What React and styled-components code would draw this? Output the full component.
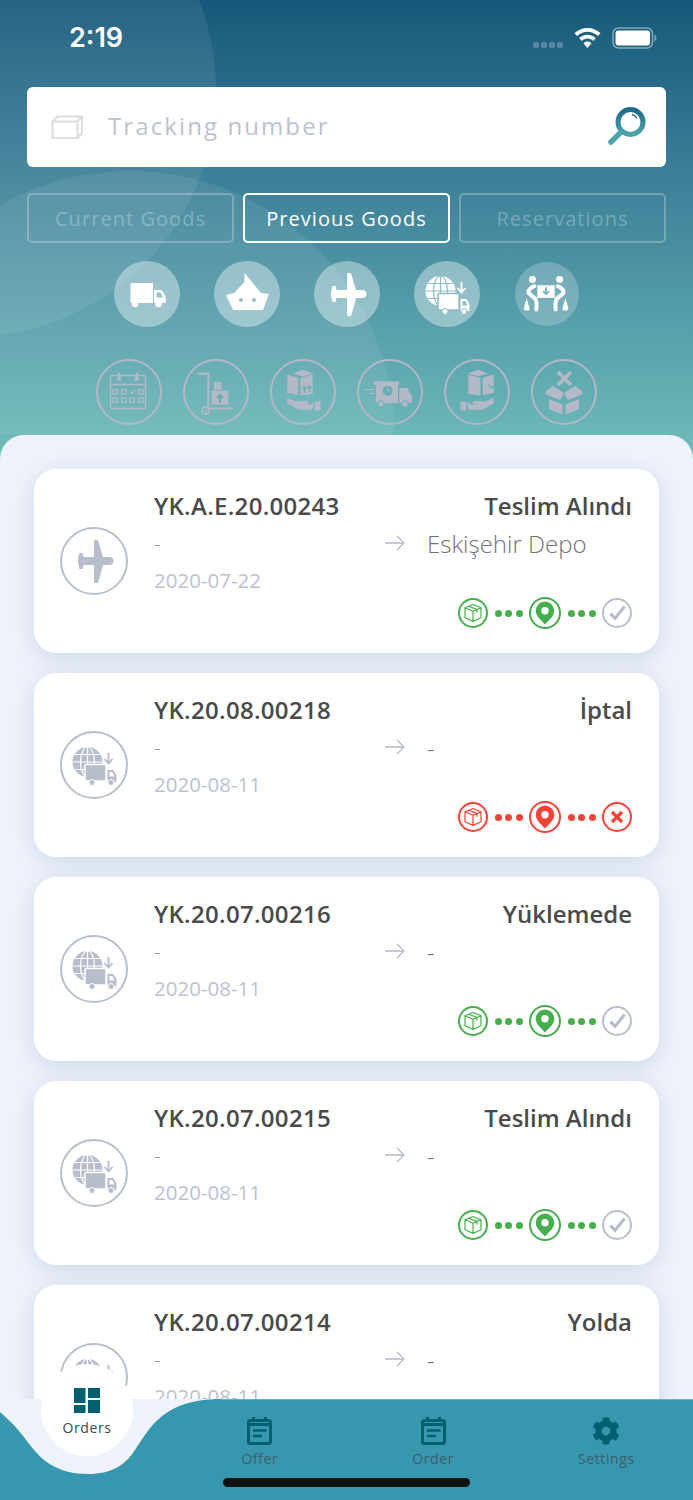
import React from 'react';
import styled, { createGlobalStyle } from 'styled-components';
import { FaCog } from 'react-icons/fa';

const Global = createGlobalStyle`
  html, body { margin: 0; padding: 0; background: #eef2fb; }
  * { box-sizing: border-box; }
  body { font-family: "Open Sans", "Noto Sans", sans-serif; }
`;

const Page = styled.div`
  width: 693px; height: 1500px; overflow: hidden; display: flex; flex-direction: column;
  background: linear-gradient(180deg, #165879 0%, #3b7f98 37%, #72bebc 100%) no-repeat;
  background-size: 100% 470px;
`;
const Header = styled.header`
  position: relative; height: 435px; flex: none; overflow: hidden; padding: 0 27px;
  display: flex; flex-direction: column;
`;
const Blob = styled.div`
  position: absolute; border-radius: 50%; background: rgba(255,255,255,.075); pointer-events: none;
  left: ${p => p.$x - p.$r}px; top: ${p => p.$y - p.$r}px; width: ${p => p.$r * 2}px; height: ${p => p.$r * 2}px;
`;
const StatusBar = styled.div`
  position: relative; height: 87px; flex: none; display: flex; justify-content: space-between; align-items: flex-start;
  padding: 20px 9px 0 42px; color: #fff;
`;
const Time = styled.div`
  font-family: Inter, "Liberation Sans", Arial, sans-serif; font-weight: 600; font-size: 27px; line-height: 36px;
`;
const StatusIcons = styled.div`display: flex; align-items: center; gap: 11px; margin-top: 7px;`;
const SearchBox = styled.div`
  position: relative; height: 80px; flex: none; background: #fff; border-radius: 6px; display: flex; align-items: center;
  padding: 0 20px 0 24px;
`;
const Placeholder = styled.div`
  flex: 1; margin: -4px 0 0 25px; color: #bcc2d2; font-size: 24px; letter-spacing: 2.1px;
`;
const SearchSlot = styled.div`display: flex; margin-top: -2px;`;
const Tabs = styled.div`position: relative; display: flex; gap: 9px; margin-top: 26px; flex: none;`;
const TabBtn = styled.div`
  flex: 1; height: 50px; border-radius: 5px; display: flex; align-items: center; justify-content: center;
  font-size: 20px; letter-spacing: 1.05px;
  border: 2px solid ${p => p.$active ? '#fff' : 'rgba(255,255,255,.25)'};
  color: ${p => p.$active ? '#fff' : 'rgba(255,255,255,.28)'};
`;
const ModeRow = styled.div`
  position: relative; display: flex; justify-content: center; align-items: center; gap: ${p => p.$gap}px; margin-top: ${p => p.$top}px; flex: none;
`;
const ModeBtn = styled.div`
  width: ${p => p.$dim ? 64 : 66}px; height: ${p => p.$dim ? 64 : 66}px; border-radius: 50%;
  background: rgba(255,255,255,${p => p.$dim ? .22 : .38}); color: #fff;
  display: flex; align-items: center; justify-content: center; flex: none; margin-left: ${p => p.$dim ? 1 : 0}px;
`;
const StateBtn = styled.div`
  width: 66px; height: 66px; border-radius: 50%; border: 2px solid #b2b8c6; color: #b3b9c7;
  display: flex; align-items: center; justify-content: center; flex: none;
`;
const Panel = styled.main`
  height: 964px; flex: none; background: #eef2fb; border-radius: 24px 24px 0 0; overflow: hidden;
  padding: 34px 34px 0; display: flex; flex-direction: column; gap: 20px;
`;
const Card = styled.article`
  height: 184px; flex: none; background: #fff; border-radius: 22px; display: flex; align-items: center;
  box-shadow: 0 5px 22px rgba(120,140,180,.25); padding: 0 27px 0 26px;
`;
const CardIcon = styled.div`
  width: 68px; height: 68px; border-radius: 50%; border: 2px solid #b9c0ce; color: #b7bdcb; flex: none; margin: 0 26px 1px 0;
  display: flex; align-items: center; justify-content: center;
`;
const CardBody = styled.div`flex: 1; min-width: 0; height: 100%; padding-top: 19px; display: flex; flex-direction: column;`;
const TitleRow = styled.div`
  display: flex; justify-content: space-between; font-size: 24px; font-weight: 600; color: #4a4a4a; line-height: 36px;
`;
const OrderId = styled.span`letter-spacing: .3px;`;
const RouteRow = styled.div`
  display: grid; grid-template-columns: 230px 43px 1fr; align-items: center; height: 38px;
  font-size: 24px; font-weight: 300; color: #6f7278;
`;
const Dash = styled.span`color: ${p => p.$left ? '#8d919c' : '#6f7278'}; font-size: ${p => p.$small ? 20 : 24}px;`;
const ArrowCell = styled.div`color: #b4bbca; display: flex; align-items: center; padding-left: 1px;`;
const DateText = styled.div`font-size: 20.5px; color: #bcc2d1; line-height: 28px; margin-top: 4px;`;
const Track = styled.div`display: flex; align-items: center; justify-content: flex-end; gap: 6.5px; margin-top: 3px; height: 32px;`;
const Stage = styled.div`
  width: ${p => p.$size || 30}px; height: ${p => p.$size || 30}px; border-radius: 50%; flex: none;
  border: 2px solid ${p => p.$color}; color: ${p => p.$color};
  display: flex; align-items: center; justify-content: center;
`;
const Dots = styled.div`display: flex; gap: 3.5px;`;
const Dot = styled.i`width: 7px; height: 7px; border-radius: 50%; background: ${p => p.$color}; display: block;`;

const TabBar = styled.nav`
  position: relative; height: 101px; flex: none; background: #eef2fb;
  display: grid; grid-template-columns: repeat(4, 1fr);
`;
const Wave = styled.svg`position: absolute; inset: 0; display: block;`;
const NavItem = styled.div`
  position: relative; display: flex; flex-direction: column; align-items: center; padding-top: 18px;
  color: #00606f; font-size: 14px;
`;
const NavLabel = styled.span`color: #3f5e6b; font-size: 14px; letter-spacing: .6px; line-height: 19px; margin-top: 4px;`;
const OrdersBubble = styled.div`
  position: absolute; left: 41px; top: -35px; width: 92px; height: 92px; border-radius: 50%; background: #fff;
  display: flex; flex-direction: column; align-items: center; padding-top: 24px; color: #00606f;
`;
const OrdersLabel = styled.span`color: #444; font-size: 14px; letter-spacing: .6px; line-height: 19px; margin-top: 5px;`;
const HomeBar = styled.div`
  position: absolute; left: 223px; top: 79px; width: 247px; height: 9px; border-radius: 5px; background: #111;
`;

/* ---------- drawings ---------- */
const Ico = ({ children, s = 66, vb = 66 }) => (
  <svg width={s} height={s} viewBox={`0 0 ${vb} ${vb}`} style={{ flex: 'none', margin: -2 }} fill="currentColor">{children}</svg>
);
const Truck = () => (
  <Ico>
    <path d="M16.500 23.500q0-1.500 1.500-1.500H38q1 0 1 1v19H18q-1.500 0-1.500-1.500z" />
    <path d="M40 29h6.500q1.500 0 2.300 1.500l3 6V42H40zM42.500 31.500v5h6.500l-2.500-5z" fillRule="evenodd" />
    <circle cx="21" cy="43" r="3.200" /><circle cx="44.500" cy="43" r="3.200" />
  </Ico>
);
const Ship = ({ cut }) => (
  <Ico>
    <path d="M12 34l8-2 10.500-11V12L47 32l8 1-6 16H19z" />
    <circle cx="27" cy="39" r="2" fill={cut} /><circle cx="40" cy="39" r="2" fill={cut} />
  </Ico>
);
const Plane = () => (
  <Ico>
    <path d="M33 13q0-1 1.200-1H36q1 0 1.400 1.500L42 29h6q4.500 0 4.500 4T48 37h-6l-4.500 16.500q-.4 1.500-1.500 1.500h-2q-1 0-1-2V37H22.500L21.500 41h-3L17 35v-4l1.500-6h3l1 4H33z" />
  </Ico>
);
const GlobeTruck = ({ cut }) => (
  <Ico>
    <circle cx="26.500" cy="30" r="15" />
    <g fill="none" stroke={cut} strokeWidth="1.200">
      <ellipse cx="26.500" cy="30" rx="7" ry="15" />
      <path d="M26.500 15v30M11.500 30h30M14 22.500h25M14 37.500h25" />
    </g>
    <path d="M24 34q0-1.500 1.500-1.500h18q1.500 0 1.500 1.500v15H25.500q-1.500 0-1.500-1.500z" stroke={cut} strokeWidth="1.500" />
    <path d="M46.500 38h5q1 0 1.500 1l2.500 4.500V50h-9zM48.500 40v4.500h5l-2.200-4.500z" fillRule="evenodd" />
    <circle cx="31" cy="50.500" r="3" stroke={cut} strokeWidth="1" /><circle cx="50" cy="50.500" r="3" stroke={cut} strokeWidth="1" />
    <path d="M47.500 21v10M43.500 27l4 4.500 4-4.500" fill="none" stroke="currentColor" strokeWidth="1.800" />
  </Ico>
);
const People = ({ cut }) => (
  <Ico s={64} vb={66}>
    <circle cx="18" cy="18" r="3.600" /><circle cx="46" cy="18" r="3.600" />
    <path d="M23 24h18v13H23z" />
    <path d="M32 26v6M29 30l3 3 3-3" fill="none" stroke={cut} strokeWidth="1.800" />
    <g fill="none" stroke="currentColor" strokeWidth="4.200" strokeLinecap="round" strokeLinejoin="round">
      <path d="M20 25q-7 3-6 7l7 6q2 4 1 11" /><path d="M44 25q7 3 6 7l-7 6q-2 4-1 11" />
    </g>
    <path d="M12 37l-3 11q0 2 2.500 2H14q1.500 0 1-2zM52 37l3 11q0 2-2.500 2H50q-1.500 0-1-2z" />
  </Ico>
);
const Calendar = () => (
  <Ico>
    <g fill="none" stroke="currentColor" strokeWidth="1.300" transform="translate(1.500 0)">
      <rect x="13" y="16.500" width="35" height="33" rx="2" />
      <path d="M13 25.500h35" />
      {[15.500, 24, 32.500, 41].map(x => <rect key={x} x={x} y="39" width="4.500" height="4.500" />)}
      {[15.500, 24, 41].map(x => <rect key={x} x={x} y="30.500" width="4.500" height="4.500" />)}
      <path d="M32.500 32.500l2 2 3.500-4" />
    </g>
    <rect x="22" y="13.500" width="2.500" height="6" rx="1.200" /><rect x="39.500" y="13.500" width="2.500" height="6" rx="1.200" />
    <circle cx="23.200" cy="20" r="2.200" /><circle cx="40.700" cy="20" r="2.200" />
  </Ico>
);
const Trolley = ({ cut }) => (
  <Ico>
    <path d="M14.300 14.700h11V49.500H49.700" fill="none" stroke="currentColor" strokeWidth="2" />
    <circle cx="22.700" cy="51.700" r="3.500" fill="none" stroke="currentColor" strokeWidth="1.800" />
    <circle cx="22.700" cy="51.700" r="1" />
    <rect x="31" y="23" width="7.700" height="7.700" />
    <rect x="28.700" y="31.700" width="16.600" height="14" />
    <path d="M37 43.500v-7M34 39l3-3 3 3" fill="none" stroke={cut} strokeWidth="2.200" />
  </Ico>
);
const HandBox = ({ cut, flip }) => (
  <Ico>
    <g transform={flip ? 'translate(67 0) scale(-1 1)' : undefined}>
      <path d="M23 14.500l10-3.800 10 3.800-10 3z" />
      <path d="M17.300 15.500l11 3.300V36l-11-2zM30.500 19l12.200-3.500V35l-12.200 1.500z" />
      {flip ? (
        <path d="M38.500 25l-3 4-2-2" fill="none" stroke={cut} strokeWidth="1.200" transform="translate(-16 0)" />
      ) : (
        <path d="M34.500 34v-6M32.500 30l2-2 2 2M39.500 33v-6M37.500 29l2-2 2 2" fill="none" stroke={cut} strokeWidth="1.200" />
      )}
      <path d="M17.300 39l8 3.300 11.400-.3q2.500 1 1 3.200l-5.700.8 8.500-.5 3-2 1 1-2.500 6.200H28.300l-8.300-5-2.700-1z" />
      <rect x="45" y="42.500" width="5.500" height="9" />
    </g>
  </Ico>
);
const FastTruck = ({ cut }) => (
  <Ico>
    <path d="M17 22.300h25v3.500h-1V44H19V26h-2z" />
    <path d="M42.300 29H50l4.700 7.500V44H42.300z" />
    <circle cx="24" cy="45" r="3.300" stroke={cut} strokeWidth="1" /><circle cx="48" cy="45" r="3.300" stroke={cut} strokeWidth="1" />
    <circle cx="30.700" cy="31.700" r="5.500" fill={cut} stroke="currentColor" strokeWidth="1.200" />
    <path d="M30.700 28.500v3.300h3" fill="none" stroke="currentColor" strokeWidth="1" />
    <path d="M7 30.500h11M12 34.500h6" stroke="currentColor" strokeWidth="1.200" />
  </Ico>
);
const OpenBox = () => (
  <Ico>
    <path d="M27 13l13 13M40 13L27 26" stroke="currentColor" strokeWidth="3.600" fill="none" />
    <path d="M22 27l11 7-4 7-15-6 1-3zM44 27l-11 7 4 7 15-6-1-3z" />
    <path d="M18 40l13.500 5.500v10L18 50zM48 40l-13.500 5.500v10L48 50z" />
  </Ico>
);
const BoxOutline = () => (
  <svg width="32" height="24" viewBox="0 0 32 24" fill="none" stroke="#dedede" strokeWidth="2.200">
    <path d="M1.500 6.500h25v16.500h-25zM26.500 6.500L31 1.500H6.500L1.500 6.500M26.500 23L31 18V1.500" />
  </svg>
);
const SearchIcon = () => (
  <svg width="40" height="40" viewBox="0 0 40 40" fill="none">
    <defs><linearGradient id="lens" x1="0" y1="0" x2="0" y2="1"><stop offset="0" stopColor="#1c6a8a" /><stop offset="1" stopColor="#4ea4ac" /></linearGradient></defs>
    <circle cx="24.500" cy="16" r="12.500" stroke="url(#lens)" strokeWidth="5" />
    <path d="M5 36L14 27" stroke="#4ea4ac" strokeWidth="5.500" strokeLinecap="round" />
    <path d="M26 8.500q3.500 1 5 4" stroke="#1c6a8a" strokeWidth="1.500" />
  </svg>
);
const Wifi = () => (
  <svg width="27" height="20" viewBox="0 0 27 20" fill="#fff">
    <path d="M13.500 0C8.500 0 4 2 .5 5.300l2.600 2.800C5.900 5.500 9.500 3.800 13.500 3.800s7.600 1.700 10.400 4.300l2.600-2.800C23 2 18.500 0 13.500 0z" />
    <path d="M13.500 6.800c-3.200 0-6.200 1.300-8.300 3.300l2.600 2.800c1.500-1.400 3.500-2.300 5.700-2.300s4.200.9 5.700 2.300l2.600-2.800c-2.100-2-5.100-3.300-8.300-3.300z" />
    <path d="M13.500 13.600c-1.600 0-3 .6-4 1.600l4 4.800 4-4.800c-1-1-2.400-1.600-4-1.600z" />
  </svg>
);
const Battery = () => (
  <svg width="45" height="22" viewBox="0 0 45 22">
    <rect x="1" y="1" width="39.500" height="20" rx="5.500" fill="none" stroke="rgba(255,255,255,.45)" strokeWidth="1.500" />
    <rect x="3.500" y="3.500" width="34.500" height="15" rx="3" fill="#fff" />
    <path d="M42.500 7.500q2 1 2 3.500t-2 3.500z" fill="rgba(255,255,255,.45)" />
  </svg>
);
const Signal = () => (
  <svg width="31" height="20" viewBox="0 0 31 20" fill="rgba(255,255,255,.25)" style={{ marginRight: -1 }}>
    {[3, 11, 19, 27].map(x => <rect key={x} x={x - 3} y="14" width="6" height="6" rx="2" />)}
  </svg>
);
const Arrow = () => (
  <svg width="20" height="16" viewBox="0 0 20 16" fill="none" stroke="currentColor" strokeWidth="1.300">
    <path d="M0 8h19M12 1l7 7-7 7" />
  </svg>
);
const StageBox = () => (
  <svg width="20" height="20" viewBox="0 0 20 20" fill="none" stroke="currentColor" strokeWidth="1.200" strokeLinejoin="round">
    <path d="M10 1.500l8 3.300v10L10 18.500 2 14.800v-10zM2 4.800l8 3.500 8-3.500M10 8.300v10.200M6 3.200l8 3.400v3" />
  </svg>
);
const StagePin = () => (
  <svg width="20" height="24" viewBox="0 0 20 24" fill="currentColor">
    <path fillRule="evenodd" d="M10 .5a9.300 9.300 0 0 1 9.300 9.300c0 5-5.300 9.500-9.300 13.700C6 19.300.7 14.800.7 9.800A9.300 9.300 0 0 1 10 .5zm0 5.600a3.700 3.700 0 1 0 0 7.400 3.700 3.700 0 0 0 0-7.400z" />
  </svg>
);
const StageCheck = () => (
  <svg width="20" height="18" viewBox="0 0 20 18" fill="none" stroke="#b5bbc9" strokeWidth="3">
    <path d="M3.500 9.500l4.500 5L17.500 2.500" />
  </svg>
);
const StageX = () => (
  <svg width="14" height="14" viewBox="0 0 14 14" fill="none" stroke="currentColor" strokeWidth="3.300">
    <path d="M2 2l10 10M12 2L2 12" />
  </svg>
);
const GridIcon = () => (
  <svg width="26" height="25" viewBox="0 0 26 25" fill="currentColor">
    <rect x="0" y="0" width="11.500" height="15" /><rect x="14" y="0" width="12" height="10" />
    <rect x="0" y="17" width="11.500" height="8" /><rect x="14" y="12" width="12" height="13" />
  </svg>
);
const NoteIcon = () => (
  <svg width="25" height="28" viewBox="0 0 25 28" fill="none">
    <rect x="1.500" y="3.500" width="22" height="23" rx="2" stroke="currentColor" strokeWidth="3" />
    <path d="M1.500 6h22v3h-22zM5 0h3v4H5zM17 0h3v4h-3z" fill="currentColor" />
    <path d="M6 13.500h13.500M6 19h9" stroke="currentColor" strokeWidth="2.600" />
  </svg>
);

const GREEN = '#46ae4c', RED = '#f44336', GREY = '#b9c0ce';

const StageTrack = ({ color, cancelled }) => (
  <Track>
    <Stage $color={color}><StageBox /></Stage>
    <Dots><Dot $color={color} /><Dot $color={color} /><Dot $color={color} /></Dots>
    <Stage $color={color} $size={32}><StagePin /></Stage>
    <Dots><Dot $color={color} /><Dot $color={color} /><Dot $color={color} /></Dots>
    <Stage $color={cancelled ? color : GREY}>{cancelled ? <StageX /> : <StageCheck />}</Stage>
  </Track>
);

const orders = [
  { id: 'YK.A.E.20.00243', status: 'Teslim Alındı', to: 'Eskişehir Depo', date: '2020-07-22', plane: true },
  { id: 'YK.20.08.00218', status: 'İptal', to: '-', date: '2020-08-11', cancelled: true },
  { id: 'YK.20.07.00216', status: 'Yüklemede', to: '-', date: '2020-08-11' },
  { id: 'YK.20.07.00215', status: 'Teslim Alındı', to: '-', date: '2020-08-11' },
  { id: 'YK.20.07.00214', status: 'Yolda', to: '-', date: '2020-08-11' },
];

export default function App() {
  return (
    <Page>
      <Global />
      <Header>
        <Blob $x={-31} $y={90} $r={247} />
        <Blob $x={130} $y={435} $r={264} />
        <StatusBar>
          <Time>2:19</Time>
          <StatusIcons><Signal /><Wifi /><Battery /></StatusIcons>
        </StatusBar>
        <SearchBox>
          <BoxOutline />
          <Placeholder>Tracking number</Placeholder>
          <SearchSlot><SearchIcon /></SearchSlot>
        </SearchBox>
        <Tabs>
          <TabBtn>Current Goods</TabBtn>
          <TabBtn $active>Previous Goods</TabBtn>
          <TabBtn>Reservations</TabBtn>
        </Tabs>
        <ModeRow $gap={34} $top={18}>
          <ModeBtn><Truck /></ModeBtn>
          <ModeBtn><Ship cut="#95c2c9" /></ModeBtn>
          <ModeBtn><Plane /></ModeBtn>
          <ModeBtn><GlobeTruck cut="#8fbdc5" /></ModeBtn>
          <ModeBtn $dim><People cut="#79adb7" /></ModeBtn>
        </ModeRow>
        <ModeRow $gap={21} $top={32}>
          <StateBtn><Calendar /></StateBtn>
          <StateBtn><Trolley cut="#66adb1" /></StateBtn>
          <StateBtn><HandBox cut="#66adb1" /></StateBtn>
          <StateBtn><FastTruck cut="#66adb1" /></StateBtn>
          <StateBtn><HandBox cut="#66adb1" flip /></StateBtn>
          <StateBtn><OpenBox /></StateBtn>
        </ModeRow>
      </Header>
      <Panel>
        {orders.map(o => {
          const color = o.cancelled ? RED : GREEN;
          return (
            <Card key={o.id}>
              <CardIcon>{o.plane ? <Plane /> : <GlobeTruck cut="#fff" />}</CardIcon>
              <CardBody>
                <TitleRow><OrderId>{o.id}</OrderId><span>{o.status}</span></TitleRow>
                <RouteRow>
                  <Dash $left $small>-</Dash>
                  <ArrowCell><Arrow /></ArrowCell>
                  <span>{o.to}</span>
                </RouteRow>
                <DateText>{o.date}</DateText>
                <StageTrack color={color} cancelled={o.cancelled} />
              </CardBody>
            </Card>
          );
        })}
      </Panel>
      <TabBar>
        <Wave width="693" height="101" viewBox="0 0 693 101">
          <path d="M0 13C14 25 22 35 30 46C42 62 58 75 88 75C112 75 124 66 133 54C148 33 160 0 221 0L693 0L693 101L0 101Z" fill="#3697ae" />
          <path d="M221 .5L693 .5" stroke="rgba(255,255,255,.25)" />
        </Wave>
        <NavItem />
        <NavItem><NoteIcon /><NavLabel>Offer</NavLabel></NavItem>
        <NavItem><NoteIcon /><NavLabel>Order</NavLabel></NavItem>
        <NavItem><FaCog size={28} /><NavLabel>Settings</NavLabel></NavItem>
        <OrdersBubble><GridIcon /><OrdersLabel>Orders</OrdersLabel></OrdersBubble>
        <HomeBar />
      </TabBar>
    </Page>
  );
}
